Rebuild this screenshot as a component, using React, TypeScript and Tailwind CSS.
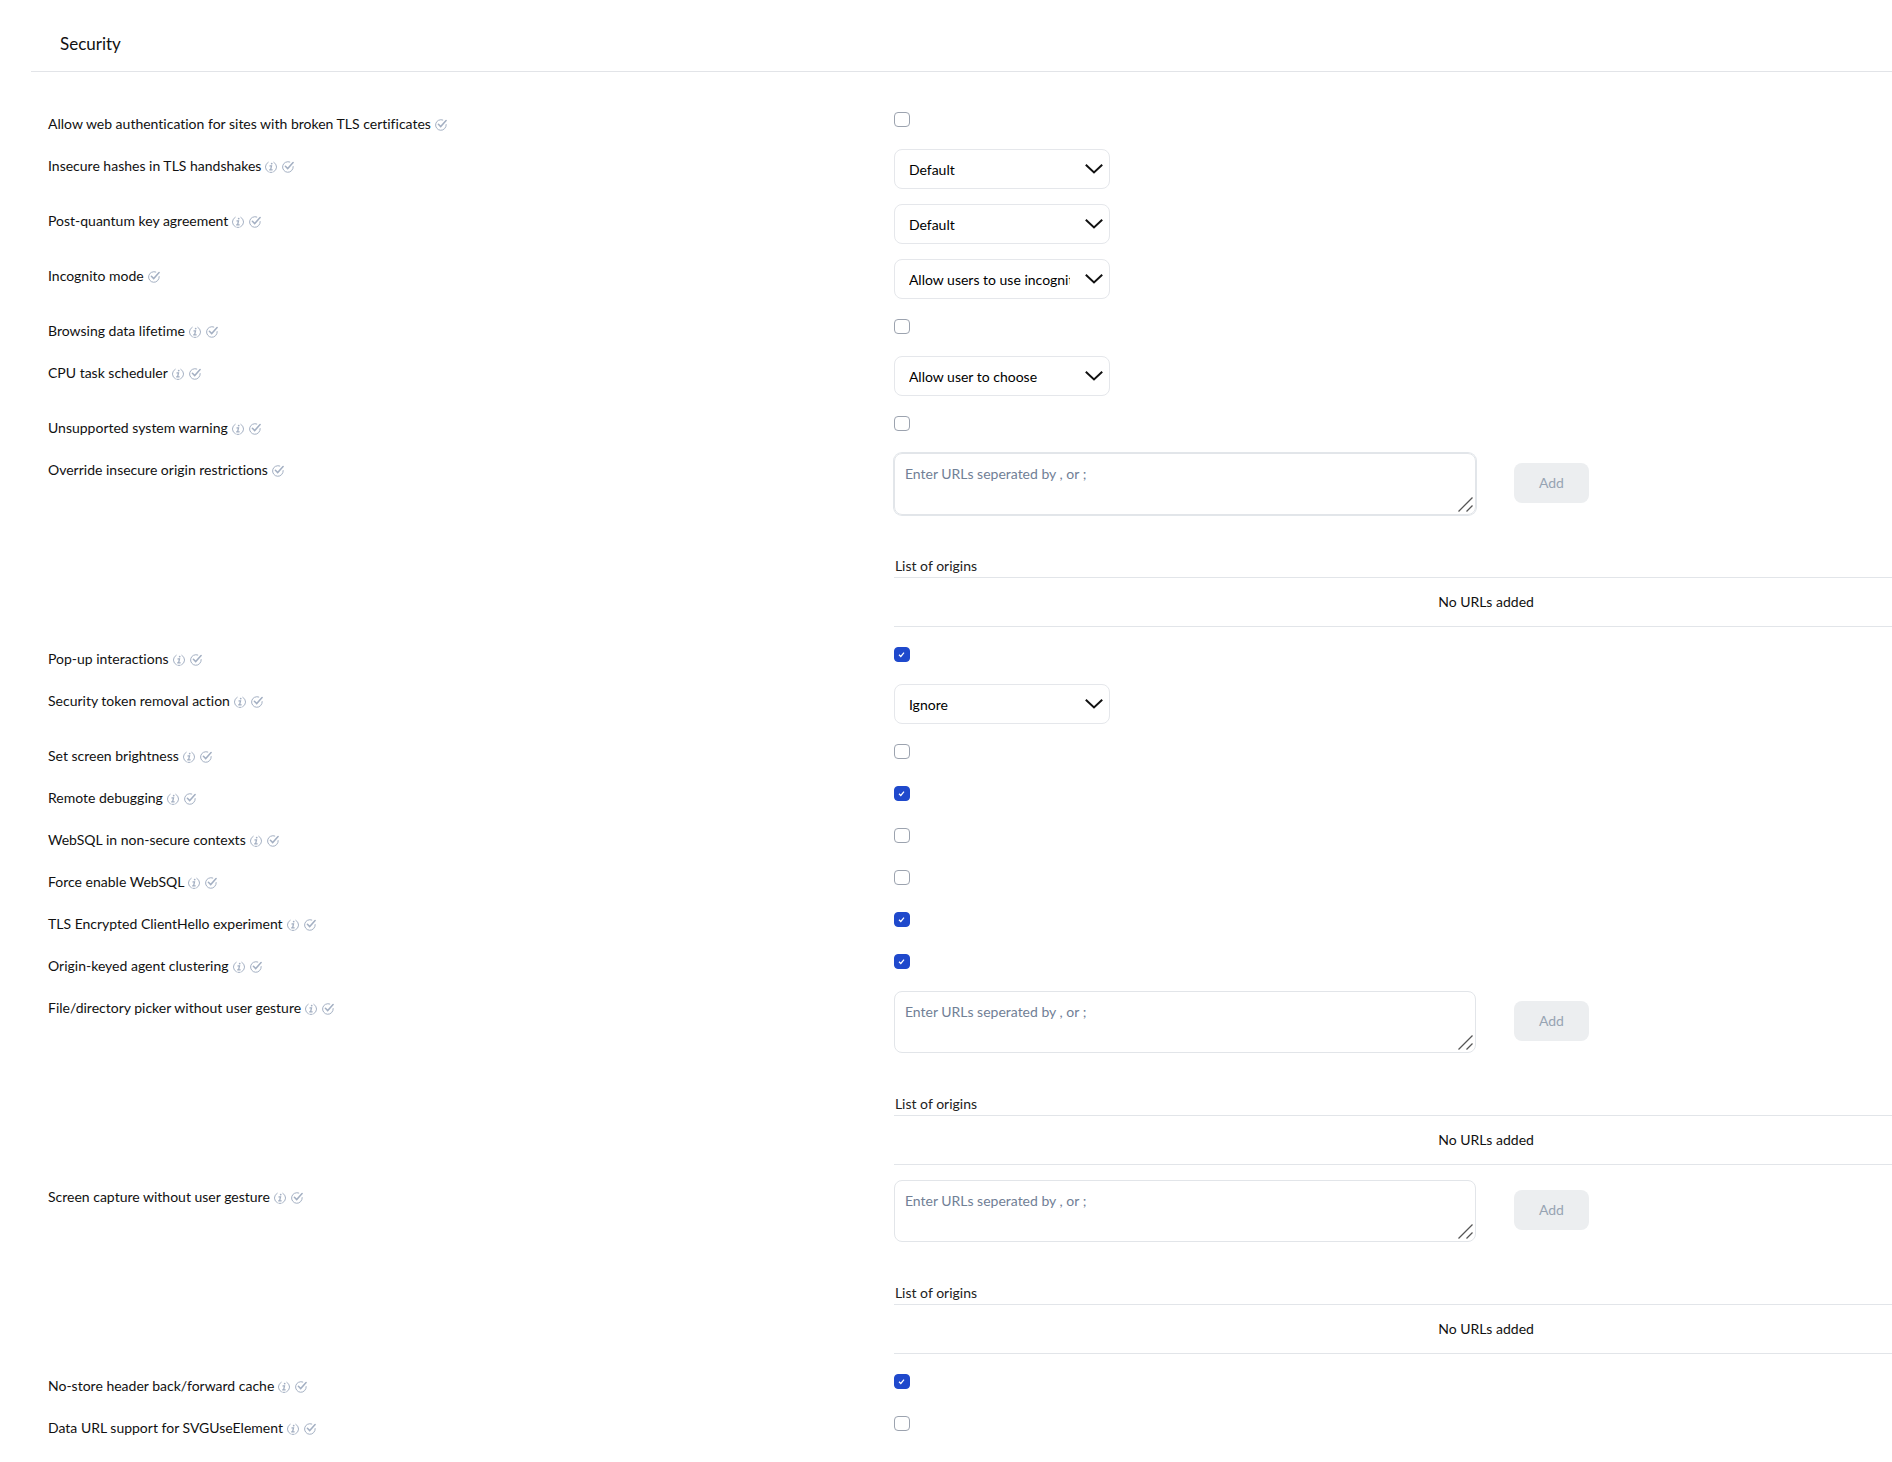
import { useId, useState } from 'react'

type Setting = {
  label: string
  info?: boolean
} & (
  | { kind: 'check'; on?: boolean }
  | { kind: 'select'; options: string[] }
  | { kind: 'urls'; active?: boolean }
)

const settings: Setting[] = [
  { label: 'Allow web authentication for sites with broken TLS certificates', kind: 'check' },
  { label: 'Insecure hashes in TLS handshakes', info: true, kind: 'select', options: ['Default'] },
  { label: 'Post-quantum key agreement', info: true, kind: 'select', options: ['Default'] },
  { label: 'Incognito mode', kind: 'select', options: ['Allow users to use incognito mode'] },
  { label: 'Browsing data lifetime', info: true, kind: 'check' },
  { label: 'CPU task scheduler', info: true, kind: 'select', options: ['Allow user to choose'] },
  { label: 'Unsupported system warning', info: true, kind: 'check' },
  { label: 'Override insecure origin restrictions', kind: 'urls', active: true },
  { label: 'Pop-up interactions', info: true, kind: 'check', on: true },
  { label: 'Security token removal action', info: true, kind: 'select', options: ['Ignore'] },
  { label: 'Set screen brightness', info: true, kind: 'check' },
  { label: 'Remote debugging', info: true, kind: 'check', on: true },
  { label: 'WebSQL in non-secure contexts', info: true, kind: 'check' },
  { label: 'Force enable WebSQL', info: true, kind: 'check' },
  { label: 'TLS Encrypted ClientHello experiment', info: true, kind: 'check', on: true },
  { label: 'Origin-keyed agent clustering', info: true, kind: 'check', on: true },
  { label: 'File/directory picker without user gesture', info: true, kind: 'urls' },
  { label: 'Screen capture without user gesture', info: true, kind: 'urls' },
  { label: 'No-store header back/forward cache', info: true, kind: 'check', on: true },
  { label: 'Data URL support for SVGUseElement', info: true, kind: 'check' },
]

function InfoIcon() {
  return (
    <svg viewBox="0 0 12 12" className="w-3 h-3 shrink-0" fill="none" stroke="#a3afc2" strokeLinecap="round" aria-hidden="true">
      <path d="M3.2 1.3A5.4 5.4 0 0 0 3.4 10.8M4.8 11.3a5.4 5.4 0 0 0 2.4 0M8.6 10.8A5.4 5.4 0 0 0 8.8 1.3" />
      <path d="M5 4.9h1.5L5.6 8.8h1.6M4.6 8.8h1" strokeWidth="1.3" />
      <circle cx="6.7" cy="2.6" r=".9" fill="#a3afc2" stroke="none" />
    </svg>
  )
}

function CheckCircleIcon() {
  return (
    <svg viewBox="0 0 12 12" className="w-3 h-3 shrink-0" fill="none" stroke="#a3afc2" strokeLinecap="round" aria-hidden="true">
      <path d="M7.8 1A5.3 5.3 0 1 0 11.2 5.6" />
      <path d="M3.4 5.2 5.7 7.6 11.1 1.6" strokeWidth="1.5" />
    </svg>
  )
}

function Checkbox({ id, on }: { id: string; on?: boolean }) {
  const [checked, setChecked] = useState(!!on)
  return (
    <div className="relative mt-[5px] mb-[7px] w-4 h-[15px]">
      <input
        id={id}
        type="checkbox"
        checked={checked}
        onChange={e => setChecked(e.target.checked)}
        className="block w-4 h-[15px] appearance-none rounded border border-[#9ca3af] bg-white checked:border-[#1f49cc] checked:bg-[#1f49cc]"
      />
      {checked && (
        <svg viewBox="0 0 16 15" className="absolute inset-0 pointer-events-none" fill="none" stroke="#fff" strokeWidth="1.2" aria-hidden="true">
          <path d="M5 7.8 6.8 9.5 10 5.6" />
        </svg>
      )}
    </div>
  )
}

function Select({ id, options }: { id: string; options: string[] }) {
  return (
    <div className="relative w-[216px]">
      <select
        id={id}
        className="block w-full h-10 appearance-none rounded-lg border border-[#e5e7eb] bg-white pt-[2px] pl-[14px] pr-[39px] text-sm text-black"
      >
        {options.map(o => <option key={o}>{o}</option>)}
      </select>
      <svg viewBox="0 0 18 10" className="absolute right-[7px] top-[15px] w-[18px] h-[10px] pointer-events-none" fill="none" stroke="#111" strokeWidth="2" aria-hidden="true">
        <path d="M.8.8 9 8.4 17.2.8" />
      </svg>
    </div>
  )
}

function UrlList({ id, active }: { id: string; active?: boolean }) {
  const [value, setValue] = useState('')
  return (
    <div>
      <div className="flex items-start">
        <div className="relative w-[582px]">
          <textarea
            id={id}
            value={value}
            onChange={e => setValue(e.target.value)}
            placeholder="Enter URLs seperated by , or ;"
            className={`block w-full h-[62px] resize-none rounded-lg border border-[#e2e5e9] px-[10px] py-[10px] text-sm text-black placeholder-[#718096] outline-none ${active ? 'ring-1 ring-[#e2e6ea]' : ''}`}
          />
          <svg viewBox="0 0 15 15" className="absolute right-[3px] bottom-[3px] w-[15px] h-[15px] pointer-events-none" stroke="#555" strokeWidth="1.3" aria-hidden="true">
            <path d="M.5 14.5 14.5.5M8.5 14.5l6-6" />
          </svg>
        </div>
        <button
          type="button"
          disabled={!value.trim()}
          className="ml-[38px] mt-[10px] h-10 w-[75px] rounded-lg bg-[#eceef0] text-sm text-[#97a4b3]"
        >
          Add
        </button>
      </div>

      <table className="mt-10 w-full border-separate border-spacing-0 text-sm">
        <thead>
          <tr>
            <th className="h-[23px] border-b border-[#e2e5e9] p-0 pl-px text-left font-normal text-[#222]">List of origins</th>
          </tr>
        </thead>
        <tbody>
          <tr>
            <td className="h-[49px] border-b border-[#e2e5e9] p-0 text-center text-[#111]">No URLs added</td>
          </tr>
        </tbody>
      </table>
    </div>
  )
}

function Row({ setting }: { setting: Setting }) {
  const id = useId()
  return (
    <div className="grid grid-cols-[5fr_7fr] items-start">
      <div className="flex items-center pt-[7px]">
        <label htmlFor={id} className="text-sm leading-5 text-[#111]">{setting.label}</label>
        <span className="flex items-center gap-[5px] pt-px pl-1">
          {setting.info && <InfoIcon />}
          <CheckCircleIcon />
        </span>
      </div>
      {setting.kind === 'check' && <Checkbox id={id} on={setting.on} />}
      {setting.kind === 'select' && <Select id={id} options={setting.options} />}
      {setting.kind === 'urls' && <UrlList id={id} active={setting.active} />}
    </div>
  )
}

export default function App() {
  return (
    <main className="min-h-screen overflow-x-hidden bg-white font-['Lato',sans-serif] [font-variant-ligatures:none]">
      {/* The form is wider than the window, its right edge is cut off */}
      <div className="w-[110%]">
        <header className="ml-[31px] border-b border-[#e2e4e8] pl-[29px] pt-[30px] pb-[13px]">
          <h1 className="text-[17px] leading-7 text-[#111]">Security</h1>
        </header>
        <div className="flex flex-col gap-[15px] pl-12 pr-[3px] pt-[35px] pb-5">
          {settings.map(s => <Row key={s.label} setting={s} />)}
        </div>
      </div>
    </main>
  )
}
